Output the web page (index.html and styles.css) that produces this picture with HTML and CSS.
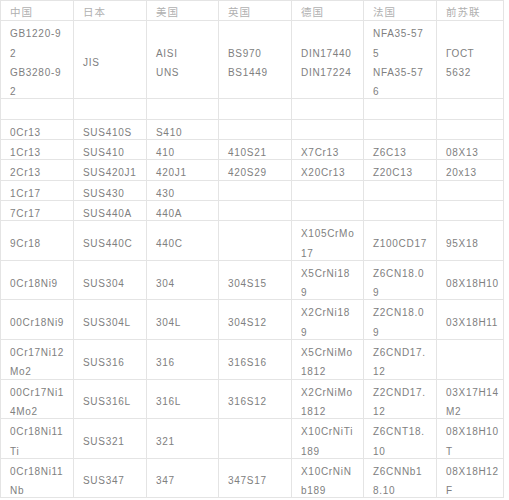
FILE: index.html
```html
<!DOCTYPE html>
<html lang="zh">
<head>
<meta charset="utf-8">
<title>不锈钢牌号对照表</title>
<link rel="stylesheet" href="styles.css">
</head>
<body>
<table class="grades">
  <colgroup>
    <col class="c1"><col class="c2"><col class="c3"><col class="c4"><col class="c5"><col class="c6"><col class="c7">
  </colgroup>
  <thead>
    <tr>
      <th><p>中国</p></th><th><p>日本</p></th><th><p>美国</p></th><th><p>英国</p></th><th><p>德国</p></th><th><p>法国</p></th><th><p>前苏联</p></th>
    </tr>
  </thead>
  <tbody>
    <tr>
      <td><p>GB1220-9<br>2<br>GB3280-9<br>2</p></td>
      <td><p>JIS</p></td>
      <td><p>AISI<br>UNS</p></td>
      <td><p>BS970<br>BS1449</p></td>
      <td><p>DIN17440<br>DIN17224</p></td>
      <td><p>NFA35-57<br>5<br>NFA35-57<br>6</p></td>
      <td><p>ГОСТ<br>5632</p></td>
    </tr>
    <tr><td><p>&nbsp;</p></td><td></td><td></td><td></td><td></td><td></td><td></td></tr>
    <tr><td><p>0Cr13</p></td><td><p>SUS410S</p></td><td><p>S410</p></td><td></td><td></td><td></td><td></td></tr>
    <tr><td><p>1Cr13</p></td><td><p>SUS410</p></td><td><p>410</p></td><td><p>410S21</p></td><td><p>X7Cr13</p></td><td><p>Z6C13</p></td><td><p>08X13</p></td></tr>
    <tr><td><p>2Cr13</p></td><td><p>SUS420J1</p></td><td><p>420J1</p></td><td><p>420S29</p></td><td><p>X20Cr13</p></td><td><p>Z20C13</p></td><td><p>20x13</p></td></tr>
    <tr><td><p>1Cr17</p></td><td><p>SUS430</p></td><td><p>430</p></td><td></td><td></td><td></td><td></td></tr>
    <tr><td><p>7Cr17</p></td><td><p>SUS440A</p></td><td><p>440A</p></td><td></td><td></td><td></td><td></td></tr>
    <tr><td><p>9Cr18</p></td><td><p>SUS440C</p></td><td><p>440C</p></td><td></td><td><p>X105CrMo<br>17</p></td><td><p>Z100CD17</p></td><td><p>95X18</p></td></tr>
    <tr><td><p>0Cr18Ni9</p></td><td><p>SUS304</p></td><td><p>304</p></td><td><p>304S15</p></td><td><p>X5CrNi18<br>9</p></td><td><p>Z6CN18.0<br>9</p></td><td><p>08X18H10</p></td></tr>
    <tr><td><p>00Cr18Ni9</p></td><td><p>SUS304L</p></td><td><p>304L</p></td><td><p>304S12</p></td><td><p>X2CrNi18<br>9</p></td><td><p>Z2CN18.0<br>9</p></td><td><p>03X18H11</p></td></tr>
    <tr><td><p>0Cr17Ni12<br>Mo2</p></td><td><p>SUS316</p></td><td><p>316</p></td><td><p>316S16</p></td><td><p>X5CrNiMo<br>1812</p></td><td><p>Z6CND17.<br>12</p></td><td></td></tr>
    <tr><td><p>00Cr17Ni1<br>4Mo2</p></td><td><p>SUS316L</p></td><td><p>316L</p></td><td><p>316S12</p></td><td><p>X2CrNiMo<br>1812</p></td><td><p>Z2CND17.<br>12</p></td><td><p>03X17H14<br>M2</p></td></tr>
    <tr><td><p>0Cr18Ni11<br>Ti</p></td><td><p>SUS321</p></td><td><p>321</p></td><td></td><td><p>X10CrNiTi<br>189</p></td><td><p>Z6CNT18.<br>10</p></td><td><p>08X18H10<br>T</p></td></tr>
    <tr><td><p>0Cr18Ni11<br>Nb</p></td><td><p>SUS347</p></td><td><p>347</p></td><td><p>347S17</p></td><td><p>X10CrNiN<br>b189</p></td><td><p>Z6CNNb1<br>8.10</p></td><td><p>08X18H12<br>F</p></td></tr>
  </tbody>
</table>
</body>
</html>
```

FILE: styles.css
```css
html, body {
  margin: 0;
  padding: 0;
  background: #ffffff;
}

.grades {
  border-collapse: collapse;
  table-layout: fixed;
  width: 503px;
  font-family: "Liberation Sans", Arial, sans-serif;
  font-size: 10px;
  letter-spacing: 0.7px;
  color: #808080;
}

.c1 { width: 73px; }
.c2 { width: 73px; }
.c3 { width: 72px; }
.c4 { width: 73px; }
.c5 { width: 72px; }
.c6 { width: 73px; }
.c7 { width: 67px; }

.grades th,
.grades td {
  border: 1px solid #e4e4e4;
  padding: 0 4px 0 9px;
  line-height: 19.3px;
  text-align: left;
  vertical-align: middle;
  white-space: nowrap;
  overflow: hidden;
}

.grades p {
  margin: 0 0 -3px;
  padding-top: 3px;
}

.grades th {
  font-family: "Noto Sans CJK SC", "Noto Sans CJK JP", sans-serif;
  font-weight: normal;
  font-size: 10.5px;
  letter-spacing: 1px;
  color: #b0b0b0;
}

.grades th p {
  margin: 0 0 -1px;
  padding-top: 1px;
}
```
